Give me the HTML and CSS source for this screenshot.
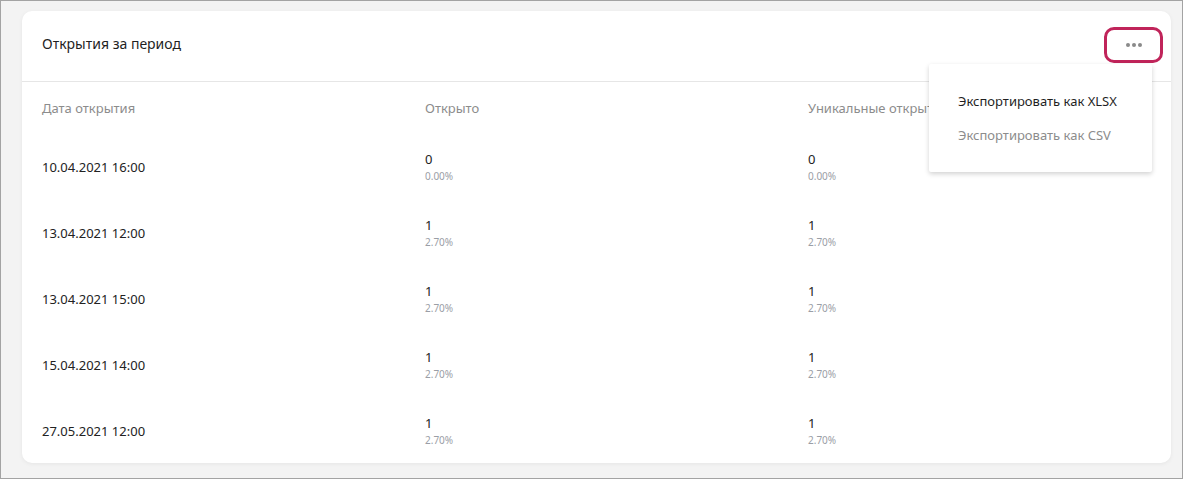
FILE: index.html
```html
<!DOCTYPE html>
<html lang="ru">
<head>
<meta charset="utf-8">
<link rel="stylesheet" href="styles.css">
</head>
<body>
<div class="frame">
  <section class="card">
    <header class="card-head">
      <h2 class="title">Открытия за период</h2>
      <button class="more" type="button" aria-label="Ещё">
        <span class="dot"></span><span class="dot"></span><span class="dot"></span>
      </button>
      <ul class="menu">
        <li class="menu-item">Экспортировать как XLSX</li>
        <li class="menu-item muted">Экспортировать как CSV</li>
      </ul>
    </header>
    <div class="table">
      <div class="row head">
        <div class="cell">Дата открытия</div>
        <div class="cell">Открыто</div>
        <div class="cell">Уникальные открытия</div>
      </div>
      <div class="row">
        <div class="cell">10.04.2021 16:00</div>
        <div class="cell"><span class="num">0</span><span class="pct">0.00%</span></div>
        <div class="cell"><span class="num">0</span><span class="pct">0.00%</span></div>
      </div>
      <div class="row">
        <div class="cell">13.04.2021 12:00</div>
        <div class="cell"><span class="num">1</span><span class="pct">2.70%</span></div>
        <div class="cell"><span class="num">1</span><span class="pct">2.70%</span></div>
      </div>
      <div class="row">
        <div class="cell">13.04.2021 15:00</div>
        <div class="cell"><span class="num">1</span><span class="pct">2.70%</span></div>
        <div class="cell"><span class="num">1</span><span class="pct">2.70%</span></div>
      </div>
      <div class="row">
        <div class="cell">15.04.2021 14:00</div>
        <div class="cell"><span class="num">1</span><span class="pct">2.70%</span></div>
        <div class="cell"><span class="num">1</span><span class="pct">2.70%</span></div>
      </div>
      <div class="row">
        <div class="cell">27.05.2021 12:00</div>
        <div class="cell"><span class="num">1</span><span class="pct">2.70%</span></div>
        <div class="cell"><span class="num">1</span><span class="pct">2.70%</span></div>
      </div>
    </div>
  </section>
</div>
</body>
</html>
```

FILE: styles.css
```css
* { box-sizing: border-box; }
html, body { margin: 0; padding: 0; }
body {
  font-family: "Noto Sans", "Open Sans", sans-serif;
  color: #222;
  background: #f3f3f3;
}
.frame {
  width: 1183px;
  height: 479px;
  border: 1px solid #a3a3a3;
  background: #f3f3f3;
  padding: 10px 11px 15px 21px;
  overflow: hidden;
}
.card {
  position: relative;
  background: #fff;
  border-radius: 10px;
  box-shadow: 0 1px 4px rgba(0,0,0,0.06);
  height: 452px;
  overflow: hidden;
}
.card-head {
  height: 71px;
  border-bottom: 1px solid #e6e6e6;
  display: flex;
  align-items: center;
  justify-content: space-between;
  padding: 0 8px 0 20px;
}
.title {
  margin: 0;
  font-size: 14px;
  font-weight: 400;
  color: #1f1f1f;
  position: relative;
  top: -3px;
}
.more {
  width: 59px;
  height: 36px;
  border: 3px solid #c0245a;
  border-radius: 10px;
  background: #fff;
  display: flex;
  align-items: center;
  justify-content: center;
  gap: 2px;
  padding: 0;
  margin-top: -3px;
  cursor: pointer;
}
.dot {
  width: 4px;
  height: 4px;
  border-radius: 50%;
  background: #8a8a8a;
}
.menu {
  position: absolute;
  top: 53px;
  right: 19px;
  width: 223px;
  margin: 0;
  padding: 20px 0;
  list-style: none;
  background: #fff;
  box-shadow: 0 2px 5px rgba(0,0,0,0.18);
  border-radius: 2px;
  z-index: 2;
}
.menu-item {
  height: 34px;
  line-height: 34px;
  padding-left: 29px;
  font-size: 13px;
  color: #1f1f1f;
}
.menu-item.muted { color: #8c8c8c; }
.table { display: flex; flex-direction: column; }
.row {
  display: grid;
  grid-template-columns: 383px 383px 383px;
  height: 66px;
  align-items: center;
}
.row.head { height: 52px; }
.cell {
  padding-left: 20px;
  font-size: 13px;
  color: #222;
  white-space: nowrap;
  overflow: hidden;
  display: flex;
  flex-direction: column;
}
.row.head .cell { color: #8c8c8c; }
.num { font-size: 13px; line-height: 17px; color: #222; }
.pct { font-size: 10px; line-height: 13px; margin-top: 2px; color: #9a9ea6; }
```
